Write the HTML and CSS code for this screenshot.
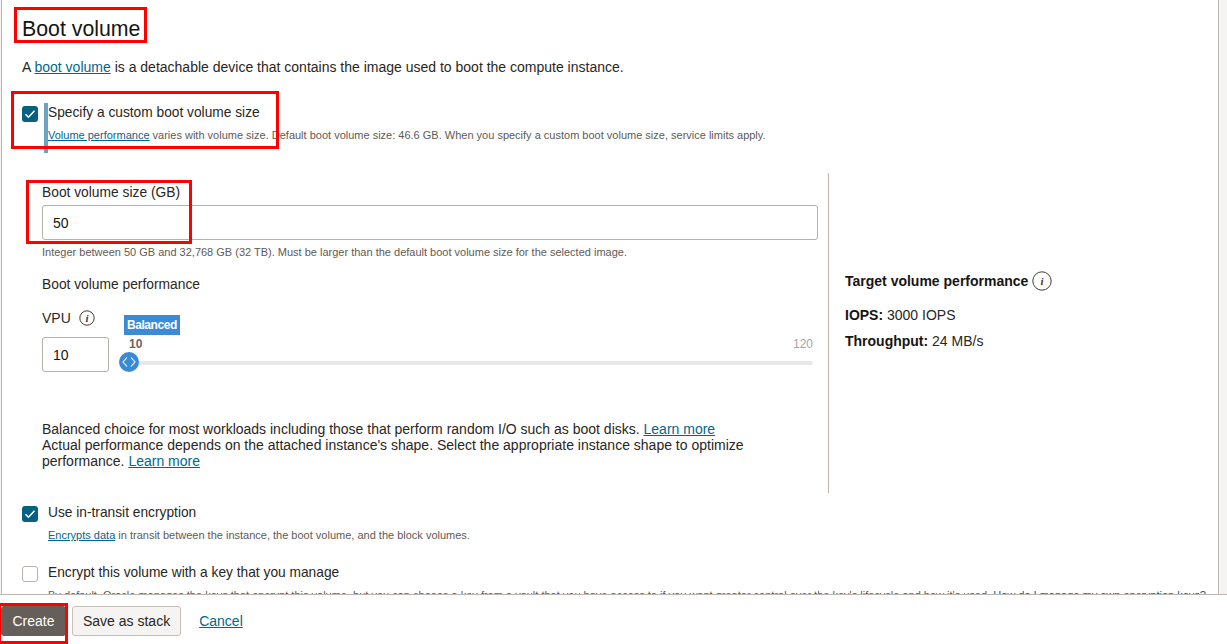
FILE: index.html
```html
<!DOCTYPE html>
<html lang="en">
<head>
<meta charset="utf-8">
<title>Boot volume</title>
<link rel="stylesheet" href="styles.css">
</head>
<body>
<div class="page">
  <div class="scroll">
  <main class="content">
    <h2 class="title">Boot volume</h2>
    <p class="intro">A <a href="#">boot volume</a> is a detachable device that contains the image used to boot the compute instance.</p>

    <div class="check-row first">
      <span class="box on"><svg viewBox="0 0 16 16" width="16" height="16"><path d="M3.5 8.2l3 3 6-6.4" fill="none" stroke="#fff" stroke-width="1.6"/></svg></span>
      <div>
        <div class="check-label">Specify a custom boot volume size</div>
        <div class="hint"><a href="#">Volume performance</a> varies with volume size. Default boot volume size: 46.6 GB. When you specify a custom boot volume size, service limits apply.</div>
      </div>
    </div>

    <section class="panel">
      <div class="panel-left">
        <label class="field-label">Boot volume size (GB)</label>
        <div class="input wide">50</div>
        <div class="hint help">Integer between 50 GB and 32,768 GB (32 TB). Must be larger than the default boot volume size for the selected image.</div>
        <div class="perf-label">Boot volume performance</div>
        <div class="vpu-row">
          <div class="vpu-col">
            <div class="vpu-label">VPU
              <svg class="info" viewBox="0 0 16 16" width="16" height="16"><circle cx="8" cy="8" r="7.2" fill="none" stroke="#3f3a36" stroke-width="1"/><text x="8" y="11.5" text-anchor="middle" class="info-i">i</text></svg>
            </div>
            <div class="input small">10</div>
          </div>
          <div class="slider">
            <span class="badge">Balanced</span>
            <div class="scale"><span class="min">10</span><span class="max">120</span></div>
            <div class="track"></div>
            <span class="thumb"><svg viewBox="0 0 20 20" width="20" height="20"><path d="M8 5.5L4 10l4 4.5M12 5.5l4 4.5-4 4.5" fill="none" stroke="#fff" stroke-width="1.1"/></svg></span>
          </div>
        </div>
        <p class="perf-text">Balanced choice for most workloads including those that perform random I/O such as boot disks. <a href="#">Learn more</a><br>Actual performance depends on the attached instance's shape. Select the appropriate instance shape to optimize performance. <a href="#">Learn more</a></p>
      </div>
      <aside class="panel-right">
        <div class="target-title">Target volume performance
          <svg class="info big" viewBox="0 0 20 20" width="20" height="20"><circle cx="10" cy="10" r="9.2" fill="none" stroke="#3f3a36" stroke-width="1"/><text x="10" y="14" text-anchor="middle" class="info-i">i</text></svg>
        </div>
        <div class="metric"><b>IOPS:</b> 3000 IOPS</div>
        <div class="metric"><b>Throughput:</b> 24 MB/s</div>
      </aside>
    </section>

    <div class="check-row second">
      <span class="box on"><svg viewBox="0 0 16 16" width="16" height="16"><path d="M3.5 8.2l3 3 6-6.4" fill="none" stroke="#fff" stroke-width="1.6"/></svg></span>
      <div>
        <div class="check-label">Use in-transit encryption</div>
        <div class="hint"><a href="#">Encrypts data</a> in transit between the instance, the boot volume, and the block volumes.</div>
      </div>
    </div>

    <div class="check-row third">
      <span class="box"></span>
      <div>
        <div class="check-label">Encrypt this volume with a key that you manage</div>
        <div class="hint nowrap">By default, Oracle manages the keys that encrypt this volume, but you can choose a key from a vault that you have access to if you want greater control over the key's lifecycle and how it's used. <a href="#">How do I manage my own encryption keys?</a></div>
      </div>
    </div>
  </main>
  </div>

  <footer class="footer">
    <button class="btn primary">Create</button>
    <button class="btn">Save as stack</button>
    <a class="cancel" href="#">Cancel</a>
  </footer>

  <span class="mark focus-bar"></span>
  <span class="mark m1"></span>
  <span class="mark m2"></span>
  <span class="mark m3"></span>
  <span class="mark m4"></span>
</div>
</body>
</html>
```
FILE: styles.css
```css
* { box-sizing: border-box; }
html, body { margin: 0; padding: 0; background: #fff; }
body { font-family: "Liberation Sans", Arial, sans-serif; font-size: 14px; color: #2a2622; overflow: hidden; }
a { color: #00688c; text-decoration: underline; }

.page { position: relative; width: 1227px; height: 644px; display: flex; flex-direction: column; overflow: hidden; }
.scroll { flex: none; height: 595px; background: #f5f4f2; border-bottom: 1px solid #bcb6b0; }
.content { height: 594px; width: 1218px; margin-left: 1px; padding: 16px 0 0 20px; background: #fff; border-left: 1px solid #bcb6b0; border-right: 1px solid #bcb6b0; overflow: hidden; }

.title { margin: 0; font-size: 21.3px; line-height: 26px; font-weight: 400; color: #161513; }
.intro { margin: 16px 0 0; line-height: 18px; }

.check-row { display: flex; gap: 10px; }
.check-row.first { margin-top: 28px; }
.check-row.second { margin-top: 11px; }
.check-row.third { margin-top: 22px; }
.box { flex: none; width: 16px; height: 16px; margin-top: 2px; border: 1px solid #b5b0aa; border-radius: 3px; background: #fff; display: block; }
.box.on { background: #04617f; border: 0; }
.box svg { display: block; }
.check-label { line-height: 18px; font-size: 13.75px; }
.hint { font-size: 11px; line-height: 13px; color: #5f5a55; margin-top: 7px; }
.nowrap { white-space: nowrap; }

.panel { display: flex; margin: 31px 0 0 0; height: 320px; }
.panel-left { width: 807px; padding: 11px 0 0 20px; border-right: 1px solid #bcb6b0; }
.panel-left > * { width: 776px; }
.field-label { display: block; line-height: 18px; font-size: 13.8px; }
.input { height: 35px; border: 1px solid #b5b0aa; border-radius: 3px; padding: 0 10px; line-height: 35px; color: #161513; margin-top: 3px; }
.hint.help { margin-top: 6px; }
.perf-label { margin-top: 17px; line-height: 18px; font-size: 13.8px; }
.vpu-row { display: flex; gap: 10px; margin-top: 15px; padding-right: 5px; }
.vpu-col { width: 67px; flex: none; }
.vpu-label { line-height: 18px; display: flex; align-items: center; gap: 8px; height: 18px; }
.input.small { width: 67px; margin-top: 10px; }
.info { display: block; flex: none; }
.info-i { font-family: "Liberation Serif", serif; font-style: italic; font-size: 11px; fill: #3f3a36; font-weight: 700; }
.slider { position: relative; flex: 1; padding-left: 5px; padding-top: 6px; }
.badge { display: inline-block; background: #3a8ad5; color: #fff; font-weight: 700; font-size: 12px; line-height: 20px; height: 20px; padding: 0 3px; letter-spacing: -0.45px; }
.scale { display: flex; justify-content: space-between; font-size: 12px; line-height: 14px; margin-top: 2px; padding: 0 0 0 5px; color: #a8a39e; }
.min { font-weight: 700; color: #6a6560; }
.track { height: 4px; background: #e8e8e8; border-radius: 2px; margin: 10px 0 0 0; }
.thumb { position: absolute; left: 0; top: 43px; width: 20px; height: 20px; border-radius: 50%; background: #3a8ad5; display: block; }
.thumb svg { display: block; }
.perf-text { margin: 49px 0 0; line-height: 16px; width: 740px !important; color: #2a2622; }

.panel-right { padding: 98px 0 0 16px; }
.target-title { font-weight: 700; display: flex; align-items: center; gap: 4px; height: 20px; color: #161513; }
.metric { line-height: 18px; margin-top: 15px; }
.metric + .metric { margin-top: 8px; }
.metric b { color: #161513; }

.footer { flex: none; height: 49px; display: flex; align-items: center; gap: 6px; padding: 3px 0 0 1px; }
.btn { font: 14px "Liberation Sans", Arial, sans-serif; height: 30px; border: 1px solid #c5c0ba; border-radius: 3px; background: #f5f4f2; color: #2a2622; padding: 0 10px; }
.btn.primary { background: #665e58; border-color: #665e58; color: #fff; width: 65px; padding: 0; }
.cancel { margin-left: 12px; color: #00688c; }

.mark { position: absolute; display: block; border: 3px solid #f00; }
.focus-bar { left: 44px; top: 103px; width: 4px; height: 50px; border: 0; background: #6aa5bd; }
.m1 { left: 14px; top: 7px; width: 133px; height: 36px; }
.m2 { left: 11px; top: 91px; width: 268px; height: 58px; }
.m3 { left: 26px; top: 180px; width: 166px; height: 64px; }
.m4 { left: -2px; top: 603px; width: 70px; height: 41px; }
```
